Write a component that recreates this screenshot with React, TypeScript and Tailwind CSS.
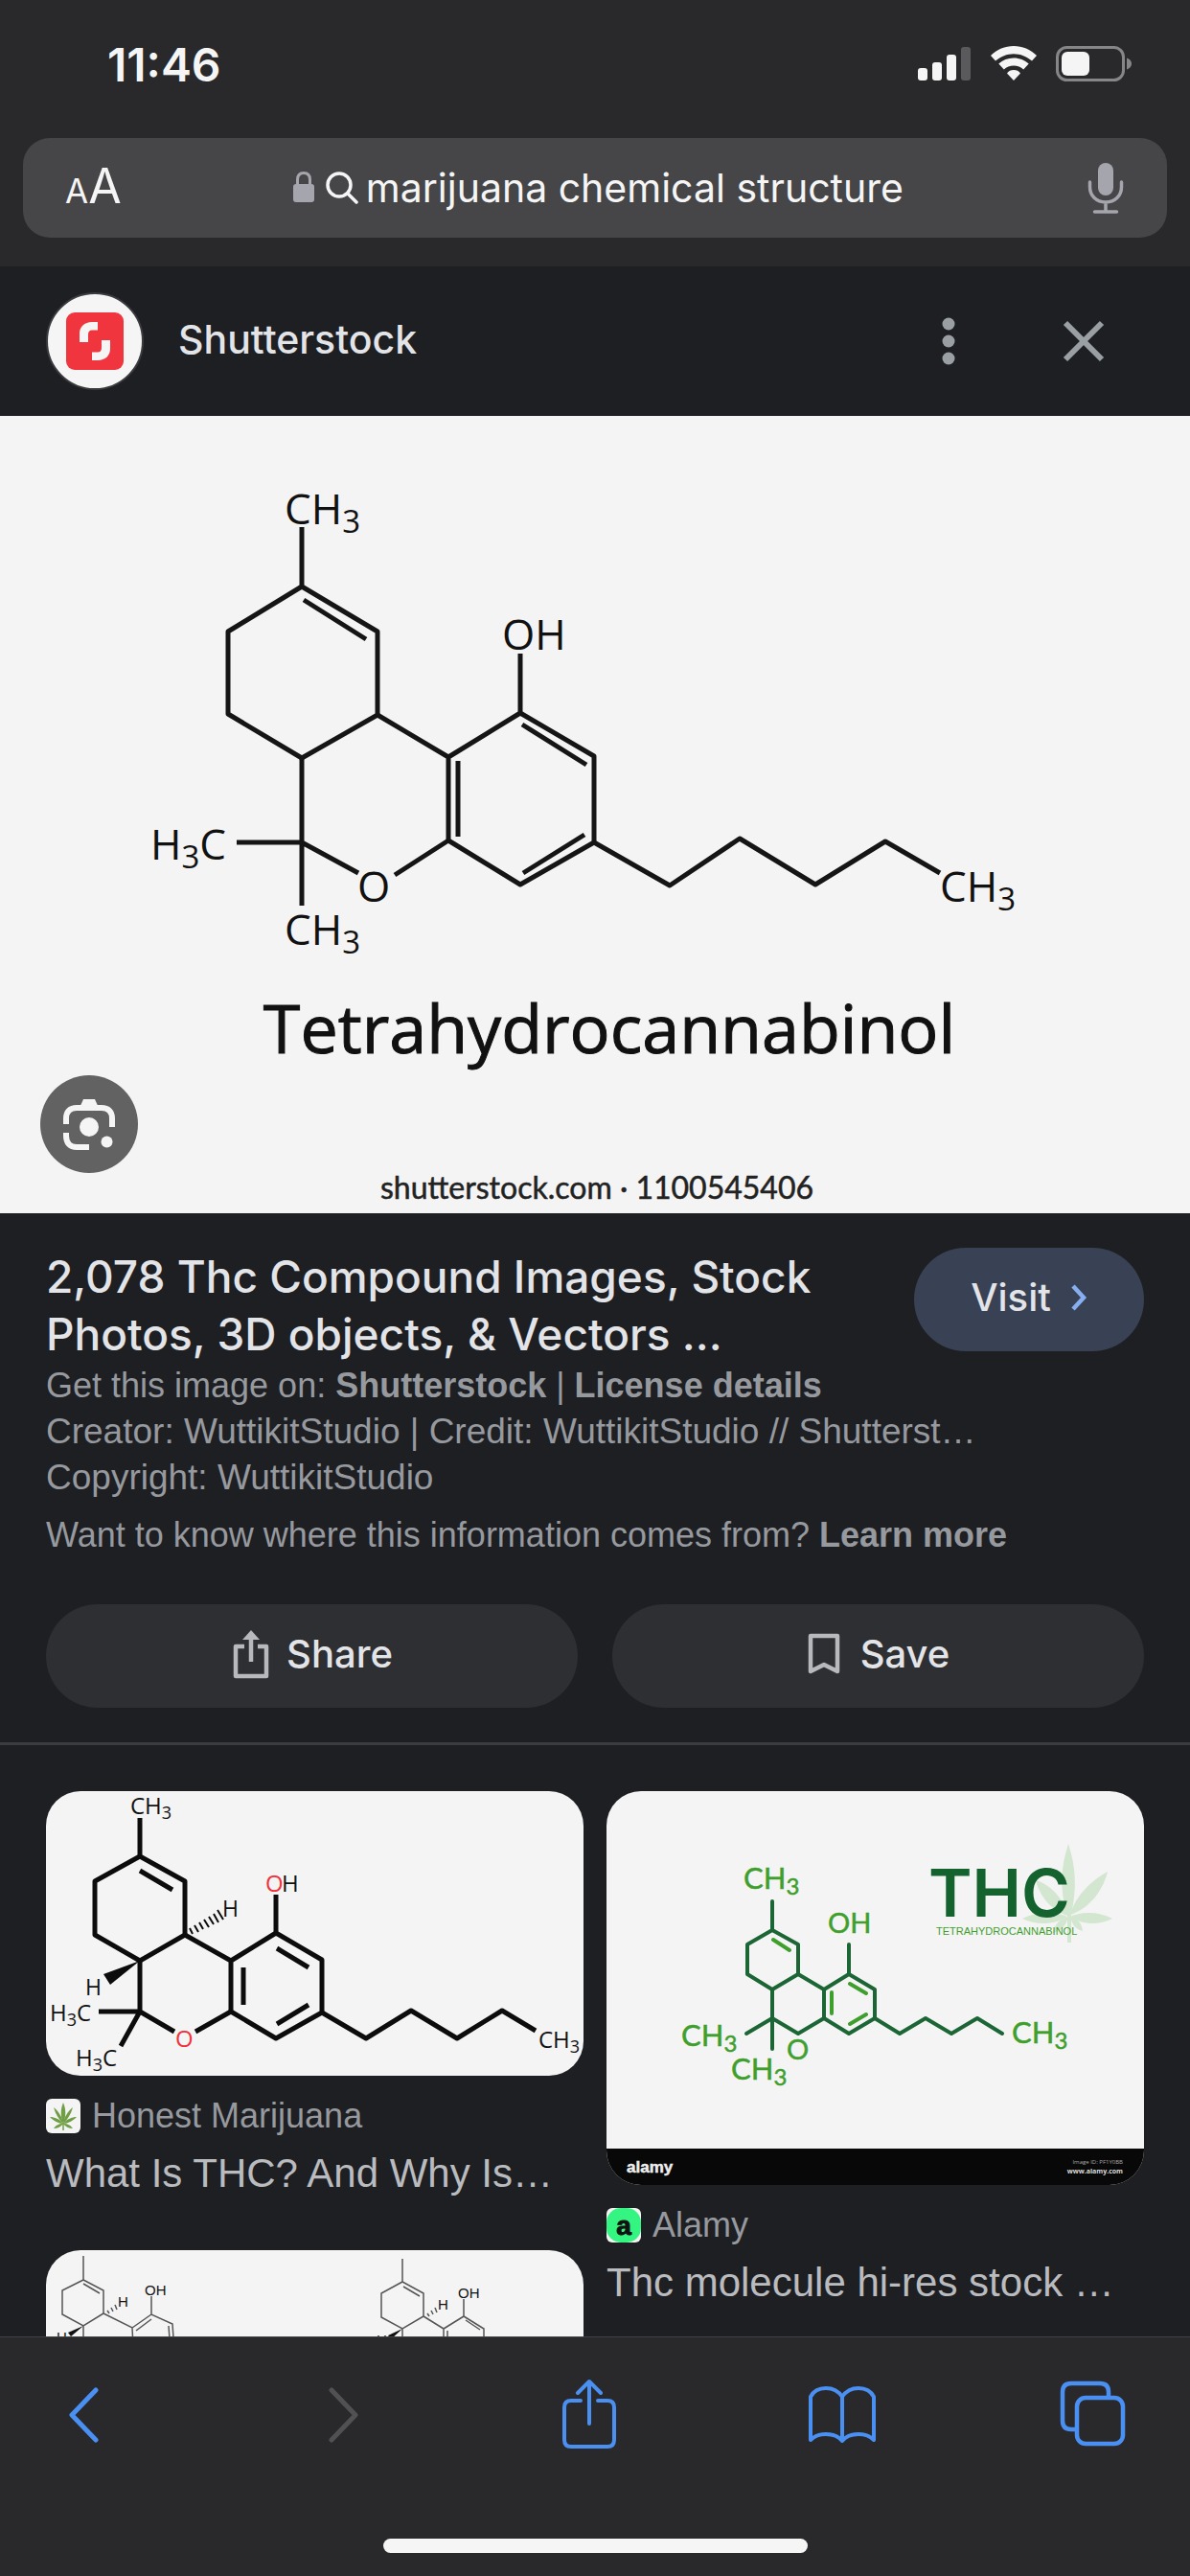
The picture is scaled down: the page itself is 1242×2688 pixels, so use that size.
import type { ReactNode } from 'react';

interface ResultCardProps {
  title: string;
  source: string;
  favicon: ReactNode;
  children: ReactNode;
}

type Anchor = 'start' | 'end';

interface AtomProps {
  x: number;
  y: number;
  size: number;
  label: string;
  anchor?: Anchor;
  fill?: string;
  family?: string;
}

// Renders a formula such as CH3 with its digits lowered
function Atom({ x, y, size, label, anchor = 'start', fill = '#111', family = '"Open Sans", sans-serif' }: AtomProps) {
  const parts = label.split(/(\d)/).filter(Boolean);
  const drop = Math.round(size / 5);
  return (
    <text x={x} y={y} fontSize={size} textAnchor={anchor} fill={fill} fontFamily={family}>
      {parts.map((part, i) => {
        const isDigit = /\d/.test(part);
        const afterDigit = i > 0 && /\d/.test(parts[i - 1]);
        return (
          <tspan key={i} fontSize={isDigit ? Math.round(size * 0.76) : size} dy={isDigit ? drop : afterDigit ? -drop : 0}>
            {part}
          </tspan>
        );
      })}
    </text>
  );
}

function StatusBar() {
  return (
    <div className="flex h-36 items-start justify-between pt-10 pr-15 pl-28">
      <span className="text-[48px] leading-[56px] font-semibold text-[#f5f5f5]">11:46</span>
      <div className="flex items-center gap-5 pt-2">
        <svg width="56" height="38" viewBox="0 0 56 38" fill="#f5f5f5" aria-hidden="true">
          <rect x="0" y="23" width="10" height="13" rx="3" />
          <rect x="15" y="17" width="10" height="19" rx="3" />
          <rect x="30" y="9" width="10" height="27" rx="3" />
          <rect x="45" y="1" width="10" height="35" rx="3" fill="#5a5a5c" />
        </svg>
        <svg width="48" height="38" viewBox="0 0 48 38" fill="#f5f5f5" aria-hidden="true">
          <path d="M24 0C15 0 6.500 3.500 0 10L5 15.500C10.500 11 17 8.200 24 8.200S37.500 11 43 15.500L48 10C41.500 3.500 33 0 24 0Z" />
          <path d="M24 12.500C18 12.500 12.500 14.800 8.300 18.600L13.800 24.500C16.500 22 20 20.600 24 20.600S31.500 22 34.200 24.500L39.700 18.600C35.500 14.800 30 12.500 24 12.500Z" />
          <path d="M24 25C21 25 18.500 26 17 28.500L24 36L31 28.500C29.500 26 27 25 24 25Z" />
        </svg>
        <svg width="80" height="38" viewBox="0 0 80 38" aria-hidden="true">
          <rect x="1.500" y="1.500" width="69" height="34" rx="10" fill="none" stroke="#868688" strokeWidth="3" />
          <rect x="6" y="6" width="29" height="25" rx="6" fill="#f5f5f5" />
          <path d="M74 12.500C77 13.500 79 15.500 79 18.500S77 23.500 74 24.500Z" fill="#868688" />
        </svg>
      </div>
    </div>
  );
}

function AddressBar() {
  return (
    <div className="mx-6 flex h-26 items-center justify-between rounded-[28px] bg-[#464648] px-12 text-[#f5f5f5]">
      <button type="button" aria-label="Page settings" className="-ml-1 flex items-baseline">
        <span className="text-[35px] leading-[50px]">A</span>
        <span className="text-[50px] leading-[50px]">A</span>
      </button>
      <button type="button" className="mr-3 flex items-center gap-2 text-[41px] leading-[50px]">
        <svg width="22" height="34" viewBox="0 0 22 34" className="mr-1" aria-hidden="true">
          <rect x="0" y="13" width="22" height="19" rx="3" fill="#a5a5ad" />
          <path d="M4.500 14V8.500C4.500 4 7 1.500 11 1.500S17.500 4 17.500 8.500V14" fill="none" stroke="#a5a5ad" strokeWidth="3" />
        </svg>
        <svg width="34" height="34" viewBox="0 0 34 34" fill="none" stroke="#f5f5f5" strokeWidth="3.500" strokeLinecap="round" aria-hidden="true">
          <circle cx="14" cy="14" r="12" />
          <path d="M23 23L32 32" />
        </svg>
        marijuana chemical structure
      </button>
      <button type="button" aria-label="Dictate" className="-mr-1">
        <svg width="40" height="56" viewBox="0 0 40 56" fill="none" stroke="#a5a5ad" strokeWidth="3.500" strokeLinecap="round">
          <rect x="12" y="2" width="16" height="34" rx="8" fill="#a5a5ad" stroke="none" />
          <path d="M3.500 22V27C3.500 36.500 10.500 43 20 43S36.500 36.500 36.500 27V22M20 43V52M8.500 53H31.500" />
        </svg>
      </button>
    </div>
  );
}

function SourceHeader() {
  return (
    <header className="flex h-39 items-center px-12">
      <svg width="102" height="102" viewBox="0 0 102 102" aria-hidden="true">
        <circle cx="51" cy="51" r="50" fill="#f5f5f5" stroke="#3a3b3f" strokeWidth="2" />
        <rect x="21" y="21" width="60" height="60" rx="9" fill="#f0353f" />
        <path d="M54 31H48C40 31 35 36 35 43V52H44V44C44 41 45.500 39.500 48 39.500H54ZM48 71H54C62 71 67 66 67 59V50H58V58C58 61 56.500 62.500 54 62.500H48Z" fill="#f5f5f5" />
      </svg>
      <span className="ml-9 flex-1 pb-1 text-[41px] leading-[48px] font-medium text-[#e3e4e7]">Shutterstock</span>
      <button type="button" aria-label="More options" className="mr-26">
        <svg width="20" height="56" viewBox="0 0 20 56" fill="#9a9fa4">
          <circle cx="10" cy="10" r="6.500" />
          <circle cx="10" cy="28" r="6.500" />
          <circle cx="10" cy="46" r="6.500" />
        </svg>
      </button>
      <button type="button" aria-label="Close" className="mr-9">
        <svg width="54" height="54" viewBox="0 0 54 54" stroke="#9a9fa4" strokeWidth="6">
          <path d="M8 8L46 46M46 8L8 46" />
        </svg>
      </button>
    </header>
  );
}

function HeroImage() {
  return (
    <figure className="relative bg-[#f4f4f4]">
      <svg viewBox="0 0 1242 832" className="block w-full" role="img" aria-label="Tetrahydrocannabinol structure">
        <g fill="none" stroke="#151515" strokeWidth="5" strokeLinejoin="round">
          <path d="M315 116V178L394 225V312L315 357L238 311V225L315 178M317 192L382 233" />
          <path d="M394 312L468 356L543 310L620 355V445L543 489L468 443V356M545 322L612 364M478 360V439M546 477L610 437M543 248V310" />
          <path d="M315 357V511M247 445H315L374 477M412 479L468 443" />
          <path d="M620 445L699 490L772 441L851 489L924 444L981 477" />
        </g>
        <Atom x={297} y={113} size={44} label="CH3" />
        <Atom x={524} y={244} size={44} label="OH" />
        <Atom x={157} y={463} size={44} label="H3C" />
        <Atom x={373} y={507} size={44} label="O" />
        <Atom x={297} y={552} size={44} label="CH3" />
        <Atom x={981} y={507} size={44} label="CH3" />
        <text x="636" y="665" fontSize="70" textAnchor="middle" fill="#111" stroke="#111" strokeWidth="1" fontFamily='"Open Sans", sans-serif'>
          Tetrahydrocannabinol
        </text>
        <text x="623" y="817" fontSize="32" textAnchor="middle" fill="#222" stroke="#222" strokeWidth="0.500" fontFamily="Lato, sans-serif">
          shutterstock.com · 1100545406
        </text>
      </svg>
      <button
        type="button"
        aria-label="Search inside image"
        className="absolute bottom-10.5 left-10.5 flex size-25.5 items-center justify-center rounded-full bg-[#626262]"
      >
        <svg width="56" height="56" viewBox="0 0 56 56" fill="none" stroke="#f5f5f5" strokeWidth="6">
          <path d="M4 28V22C4 15 8 11 15 11H41C48 11 52 15 52 22V31M4 37V40C4 48 8 52 15 52H28" />
          <path d="M18 11L22 2H34L38 11Z" fill="#f5f5f5" stroke="none" />
          <circle cx="28" cy="31" r="10" fill="#f5f5f5" stroke="none" />
          <circle cx="46.500" cy="46.500" r="6" fill="#f5f5f5" stroke="none" />
        </svg>
      </button>
    </figure>
  );
}

function ImageDetails() {
  return (
    <section className="px-12 pt-9">
      <div className="flex items-start justify-between">
        <h1 className="text-[46px] leading-[60px] font-medium text-[#e3e4e7]">
          2,078 Thc Compound Images, Stock
          <br />
          Photos, 3D objects, &amp; Vectors ...
        </h1>
        <a href="#visit" className="flex h-27 w-60 shrink-0 items-center justify-center gap-5 rounded-full bg-[#384254] pb-1 text-[40px] leading-[48px] font-medium text-[#e3e4e7]">
          Visit
          <svg width="18" height="28" viewBox="0 0 18 28" fill="none" stroke="#86aef0" strokeWidth="4.500" aria-hidden="true">
            <path d="M3 2L14 14L3 26" />
          </svg>
        </a>
      </div>
      <div className="font-['Liberation_Sans',Arial,sans-serif] text-[36px] leading-[48px] text-[#96999e]">
        <p>
          Get this image on: <a href="#shutterstock" className="font-bold">Shutterstock</a> |{' '}
          <a href="#license" className="font-bold">License details</a>
        </p>
        <p className="text-[37px]">Creator: WuttikitStudio | Credit: WuttikitStudio // Shutterst…</p>
        <p className="text-[37px]">Copyright: WuttikitStudio</p>
        <p className="mt-3">
          Want to know where this information comes from? <a href="#learn" className="font-bold">Learn more</a>
        </p>
      </div>
      <div className="mt-12 grid grid-cols-2 gap-9 text-[40px] leading-[48px] font-medium text-[#e3e4e7]">
        <button type="button" className="flex h-27 items-center justify-center gap-4 rounded-full bg-[#2e2f33] pb-1">
          <svg width="42" height="54" viewBox="0 0 42 54" fill="none" stroke="#b7b9bd" strokeWidth="4.500" aria-hidden="true">
            <path d="M14 19H5V50H37V19H28M21 35V8" strokeLinejoin="round" />
            <path d="M12 12L21 2L30 12Z" fill="#b7b9bd" stroke="none" />
          </svg>
          Share
        </button>
        <button type="button" className="flex h-27 items-center justify-center gap-5 rounded-full bg-[#2e2f33] pb-1">
          <svg width="36" height="46" viewBox="0 0 36 46" fill="none" stroke="#b7b9bd" strokeWidth="4.500" strokeLinejoin="round" aria-hidden="true">
            <path d="M4 4H32V41L18 34L4 41Z" />
          </svg>
          Save
        </button>
      </div>
    </section>
  );
}

function ResultCard({ title, source, favicon, children }: ResultCardProps) {
  return (
    <a href="#result" className="block font-['Liberation_Sans',Arial,sans-serif]">
      <div className="overflow-hidden rounded-[36px] bg-[#f4f4f4]">{children}</div>
      <div className="mt-5.5 flex h-10 items-center gap-3 text-[36px] leading-[40px] text-[#96999e]">
        {favicon}
        {source}
      </div>
      <p className="mt-3 truncate text-[42px] leading-[56px] text-[#b9bbbf]">{title}</p>
    </a>
  );
}

function ThcStereoImage() {
  return (
    <svg viewBox="0 0 561 297" className="block w-full" role="img" aria-label="THC stereo structure">
      <g fill="none" stroke="#0c0c0c" strokeWidth="5" strokeLinejoin="round">
        <path d="M98 28V68L145 94V150L98 177L51 150V94L98 68M98 83L132 103" />
        <path d="M145 150L193 177L240 148L288 176V231L240 258L193 230V177M241 164L274 184M206 184V223M241 243L274 223M240 108V148" />
        <path d="M98 177V230M55 230H98L134 251M156 251L193 230M98 230L78 266" />
        <path d="M288 231L334 258L381 229L429 258L476 229L511 250" />
        <path d="M150 143L153 149M155 140L159 147M160 137L164 144M165 134L170 142M170 131L175 139M175 128L180 137M179 124L185 134" strokeWidth="2" />
      </g>
      <path d="M98 177L60 191L67 202Z" fill="#0c0c0c" />
      <Atom x={88} y={24} size={24} label="CH3" />
      <Atom x={229} y={105} size={24} label="O" fill="#f0323c" />
      <Atom x={246} y={105} size={24} label="H" />
      <Atom x={184} y={131} size={23} label="H" />
      <Atom x={41} y={213} size={23} label="H" />
      <Atom x={4} y={240} size={24} label="H3C" />
      <Atom x={31} y={287} size={24} label="H3C" />
      <Atom x={135} y={267} size={24} label="O" fill="#f0323c" />
      <Atom x={514} y={268} size={24} label="CH3" />
    </svg>
  );
}

function ThcGreenImage() {
  const lato = 'Lato, sans-serif';
  return (
    <svg viewBox="0 0 561 411" className="block w-full" role="img" aria-label="THC molecule">
      <g fill="#d3e6d0">
        <path d="M482 55C474 80 473 100 480 129H485C491 100 490 80 482 55Z" />
        <path d="M523 84C505 94 489 110 484 129C500 124 517 108 523 84Z" />
        <path d="M448 93C452 110 464 124 481 130C478 114 465 98 448 93Z" />
        <path d="M528 133C512 125 496 126 484 131C496 139 512 141 528 133Z" />
        <path d="M434 133C450 125 468 126 481 131C468 139 450 141 434 133Z" />
        <path d="M482 131C472 134 468 139 466 148C474 146 480 141 482 131ZM484 131C494 134 496 139 497 146C490 144 486 140 484 131Z" />
        <path d="M481 128H485V158H481Z" />
      </g>
      <g fill="none" stroke="#1c6636" strokeWidth="4" strokeLinejoin="round" strokeLinecap="round">
        <path d="M173 115V145L200 160V191L173 207L147 191V160L173 145" />
        <path d="M200 191L227 207L253 191L280 207V237L253 253L227 237V207M253 160V191" />
        <path d="M173 207V269M146 253L173 237L200 253L227 237" />
        <path d="M280 237L306 253L333 237L360 253L387 237L413 253" />
        <path d="M174 155L191 166M254 201L271 211M235 210V232M254 243L271 233" stroke="#3f9f2c" />
      </g>
      <g stroke="#3f9f2c" strokeWidth="0.500">
        <Atom x={143} y={102} size={31} label="CH3" fill="#3f9f2c" family={lato} />
        <Atom x={231} y={148} size={29} label="OH" fill="#3f9f2c" family={lato} />
        <Atom x={78} y={266} size={31} label="CH3" fill="#3f9f2c" family={lato} />
        <Atom x={130} y={301} size={31} label="CH3" fill="#3f9f2c" family={lato} />
        <Atom x={188} y={280} size={29} label="O" fill="#3f9f2c" family={lato} />
        <Atom x={423} y={263} size={31} label="CH3" fill="#3f9f2c" family={lato} />
      </g>
      <text x="336" y="131" fontSize="69" fontWeight="600" fill="#14632f" fontFamily="Inter, sans-serif">THC</text>
      <text x="344" y="150" fontSize="11" fill="#3f9f2c" fontFamily='"Liberation Sans", Arial, sans-serif'>TETRAHYDROCANNABINOL</text>
      <rect y="373" width="561" height="38" fill="#080808" />
      <text x="21" y="398" fontSize="17" fontWeight="700" fill="#eee" stroke="#eee" strokeWidth="0.500" fontFamily='"Liberation Sans", Arial, sans-serif'>alamy</text>
      <text x="539" y="389" fontSize="6" textAnchor="end" fill="#aaa" fontFamily='"Open Sans", sans-serif'>Image ID: PF1Y0BB</text>
      <text x="539" y="399" fontSize="7" fontWeight="700" textAnchor="end" fill="#ddd" fontFamily='"Open Sans", sans-serif'>www.alamy.com</text>
    </svg>
  );
}

function ComparisonImage() {
  const arial = '"Liberation Sans", Arial, sans-serif';
  return (
    <svg viewBox="0 0 561 300" className="block w-full" role="img" aria-label="Two cannabinoid structures">
      <g fill="none" stroke="#555" strokeWidth="1.500">
        <path d="M39 6V31L60 42V66L39 79L17 67V42L39 31M39 35L56 45M39 79V120" />
        <path d="M60 66L90 81L110 67L132 77L135 120M94 84L110 72M90 81L92 120M128 79L131 120M110 48V67" />
        <path d="M372 9V33L394 45V69L372 82L350 70V45L372 33M373 38L390 48M372 82V120" />
        <path d="M394 69L415 82L436 69L457 82V120M415 82V120M419 84V120M438 73L453 83M436 51V69" />
        <path d="M64 63L66 66M68 60L70 64M72 57L74 62M398 66L400 69M402 63L404 67M406 60L408 65" />
      </g>
      <path d="M39 79L23 86L26 90ZM372 82L357 89L360 93Z" fill="#111" />
      <Atom x={75} y={59} size={15} label="H" family={arial} />
      <Atom x={103} y={47} size={15} label="OH" family={arial} />
      <Atom x={11} y={96} size={15} label="H" family={arial} />
      <Atom x={409} y={62} size={15} label="H" family={arial} />
      <Atom x={430} y={50} size={15} label="OH" family={arial} />
      <Atom x={345} y={99} size={15} label="H" family={arial} />
    </svg>
  );
}

function LeafFavicon() {
  return (
    <svg width="36" height="36" viewBox="0 0 36 36" aria-hidden="true">
      <rect width="36" height="36" rx="6" fill="#f4f4f4" />
      <g fill="#6f9e45">
        <path d="M18 4C15 11 15 18 18 26C21 18 21 11 18 4Z" />
        <path d="M8 9C10 16 13 21 18 26C17 19 13 13 8 9ZM28 9C26 16 23 21 18 26C19 19 23 13 28 9Z" />
        <path d="M4 19C8 23 13 26 18 26C14 21 9 19 4 19ZM32 19C28 23 23 26 18 26C22 21 27 19 32 19Z" />
        <path d="M8 31C12 31 16 29 18 26C13 26 10 28 8 31ZM28 31C24 31 20 29 18 26C23 26 26 28 28 31Z" />
      </g>
      <path d="M18 25V33" stroke="#6f9e45" strokeWidth="1.500" />
    </svg>
  );
}

function AlamyFavicon() {
  return (
    <svg width="36" height="36" viewBox="0 0 36 36" aria-hidden="true">
      <rect width="36" height="36" rx="6" fill="#f4f4f4" />
      <rect width="36" height="36" rx="15" fill="#35f582" />
      <text x="18" y="28" fontSize="28" fontWeight="700" textAnchor="middle" fill="#111" stroke="#111" fontFamily='"Liberation Sans", Arial, sans-serif'>a</text>
    </svg>
  );
}

function BottomToolbar() {
  return (
    <nav className="border-t border-[#414244] bg-[#29292b] pt-10 pb-6">
      <div className="flex h-20 items-center justify-between pr-15 pl-12 text-[#4a90f2]">
        <button type="button" aria-label="Back" className="flex w-20 justify-center">
          <svg width="56" height="64" viewBox="0 0 56 64" fill="none" stroke="currentColor" strokeWidth="5" strokeLinecap="round" strokeLinejoin="round">
            <path d="M40 7L15 33L40 59" />
          </svg>
        </button>
        <button type="button" aria-label="Forward" disabled className="flex w-20 justify-center text-[#515153]">
          <svg width="56" height="64" viewBox="0 0 56 64" fill="none" stroke="currentColor" strokeWidth="5" strokeLinecap="round" strokeLinejoin="round">
            <path d="M22 7L47 33L22 59" />
          </svg>
        </button>
        <button type="button" aria-label="Share" className="flex w-20 justify-center">
          <svg width="60" height="76" viewBox="0 0 60 76" fill="none" stroke="currentColor" strokeWidth="4" strokeLinecap="round" strokeLinejoin="round">
            <path d="M21 24H11C6 24 4 27 4 31V65C4 69 6 72 11 72H49C54 72 56 69 56 65V31C56 27 54 24 49 24H39M30 48V4M18 16L30 4L42 16" />
          </svg>
        </button>
        <button type="button" aria-label="Bookmarks" className="flex w-20 justify-center">
          <svg width="76" height="64" viewBox="0 0 76 64" fill="none" stroke="currentColor" strokeWidth="4" strokeLinejoin="round">
            <path d="M38 14C34 8 28 5 21 5S8 8 5 14V59C9 55 14 53 21 53S34 55 38 60C42 55 48 53 55 53S67 55 71 59V14C68 8 62 5 55 5S42 8 38 14ZM38 14V59" />
          </svg>
        </button>
        <button type="button" aria-label="Tabs" className="flex w-20 justify-center">
          <svg width="72" height="70" viewBox="0 0 72 70" fill="none" stroke="currentColor" strokeWidth="4.500" strokeLinejoin="round">
            <path d="M18 51H12C6 51 3 48 3 42V12C3 6 6 3 12 3H42C48 3 51 6 51 12V17" />
            <rect x="18" y="18" width="48" height="48" rx="9" />
          </svg>
        </button>
      </div>
      <div className="mx-auto mt-[90px] h-[15px] w-[443px] rounded-full bg-[#f5f5f5]" />
    </nav>
  );
}

export default function App() {
  return (
    <div className="flex h-screen flex-col overflow-hidden bg-[#29292b] font-['Inter',sans-serif]">
      <StatusBar />
      <AddressBar />
      <main className="mt-[30px] min-h-0 flex-1 overflow-hidden bg-[#1e1f23]">
        <SourceHeader />
        <HeroImage />
        <ImageDetails />
        <section className="mt-9 grid grid-cols-2 items-start gap-6 border-t-3 border-[#3b3c40] px-12 pt-12">
          <div className="flex flex-col gap-13">
            <ResultCard title="What Is THC? And Why Is…" source="Honest Marijuana" favicon={<LeafFavicon />}>
              <ThcStereoImage />
            </ResultCard>
            <div className="overflow-hidden rounded-[36px] bg-[#f4f4f4]">
              <ComparisonImage />
            </div>
          </div>
          <ResultCard title="Thc molecule hi-res stock …" source="Alamy" favicon={<AlamyFavicon />}>
            <ThcGreenImage />
          </ResultCard>
        </section>
      </main>
      <BottomToolbar />
    </div>
  );
}
